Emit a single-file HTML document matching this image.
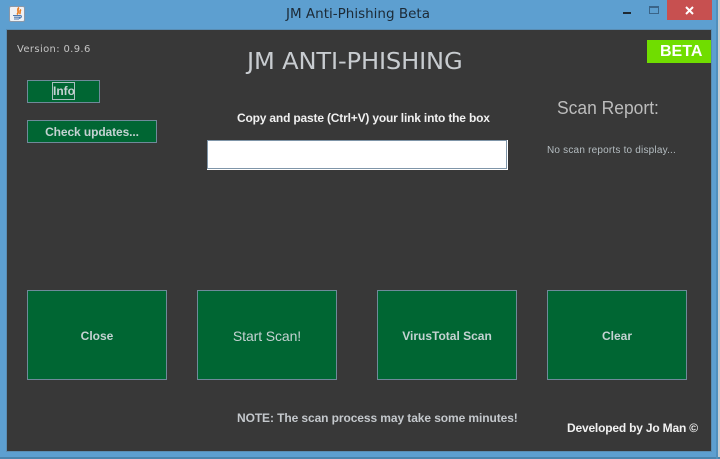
<!DOCTYPE html>
<html>
<head>
<meta charset="utf-8">
<style>
html,body{margin:0;padding:0;background:#5d9fd0;}
body{width:720px;height:459px;position:relative;overflow:hidden;font-family:"Liberation Sans",sans-serif;}
div{position:absolute;box-sizing:border-box;}
.t{white-space:nowrap;line-height:1;}
.b{background:#006633;border:1px solid #6f8a9a;color:#c4d2d2;font-weight:bold;font-size:12px;display:flex;align-items:center;justify-content:center;white-space:nowrap;padding-top:1px;}
</style>
</head>
<body>
<div style="left:718px;top:0;width:2px;height:459px;background:#c9ced2"></div>
<div style="left:0;top:457px;width:720px;height:2px;background:#4a84ad"></div>
<div style="left:716px;top:0;width:2px;height:459px;background:#4f8fbd"></div>
<div style="left:6px;top:29px;width:706px;height:423px;background:#5a8db3"></div>
<div style="left:7px;top:30px;width:704px;height:421px;background:#383838"></div>

<svg style="position:absolute;left:9px;top:6px" width="16" height="16" viewBox="0 0 16 16">
<rect x=".5" y=".5" width="15" height="15" rx="1.5" fill="#eef1f5" stroke="#8b98a8"/>
<path d="M10 1.5C7 4 11 5.5 8 8.5M12 3.5C10 5 12 6.5 10.5 8" fill="none" stroke="#e8791c" stroke-width="1.6"/>
<path d="M4 9.5h7M5 11.2h6M5 13h5M11 9.5c2 0 2 2-1 3" fill="none" stroke="#4a78b0" stroke-width="1.1"/>
</svg>
<div class="t" style="left:0;top:8px;width:716px;text-align:center;color:#1c2a36;font-family:'DejaVu Sans',sans-serif;font-size:13.5px">JM Anti-Phishing Beta</div>

<div style="left:623px;top:12px;width:8px;height:2px;background:#1f2a33"></div>
<div style="left:649px;top:6px;width:10px;height:8px;border:1px solid #3a6488;border-top-width:2px"></div>
<div style="left:667px;top:0;width:45px;height:20px;background:#c75050"></div>
<svg style="position:absolute;left:684px;top:6px" width="11" height="9" viewBox="0 0 11 9"><path d="M2 1l7 7M9 1l-7 7" stroke="#fff" stroke-width="2"/></svg>

<div class="t" style="left:17px;top:45px;color:#c4c4c4;letter-spacing:.35px;font-family:'DejaVu Sans',sans-serif;font-size:10px">Version: 0.9.6</div>

<div class="t" style="left:247px;top:51px;font-size:23px;color:#c8ccd0;font-family:'DejaVu Sans',sans-serif;letter-spacing:-.15px;transform-origin:left top;transform:scaleX(1.05)">JM ANTI-PHISHING</div>

<div style="left:647px;top:40px;width:64px;height:23px;background:#70dd00"></div>
<div class="t" style="left:660px;top:44px;font-size:16px;font-weight:bold;color:#fff">BETA</div>

<div class="b" style="left:27px;top:80px;width:73px;height:23px"></div>
<div class="t" style="left:52px;top:82px;width:23px;height:18px;border:1px solid #a9c0c0;color:#c4d2d2;font-size:12px;font-weight:bold;text-align:center;line-height:17px">Info</div>
<div class="b" style="left:27px;top:120px;width:130px;height:23px;letter-spacing:-.1px">Check updates...</div>

<div class="t" style="left:237px;top:112px;font-size:12px;font-weight:bold;color:#f0f0f0;letter-spacing:-.18px">Copy and paste (Ctrl+V) your link into the box</div>

<div style="left:207px;top:140px;width:301px;height:30px;background:#fff"></div>
<div style="left:207px;top:140px;width:300px;height:1px;background:#7f95a8"></div>
<div style="left:207px;top:140px;width:1px;height:29px;background:#7f95a8"></div>
<div style="left:506px;top:141px;width:1px;height:28px;background:#7f95a8"></div>
<div style="left:208px;top:168px;width:299px;height:1px;background:#7f95a8"></div>

<div class="t" style="left:557px;top:99px;font-size:18px;color:#bcbcbc;transform-origin:left top;transform:scaleX(.97)">Scan Report:</div>
<div class="t" style="left:547px;top:146px;font-size:10px;color:#b4bcc0;letter-spacing:.2px">No scan reports to display...</div>

<div class="b" style="left:27px;top:290px;width:140px;height:90px">Close</div>
<div class="b" style="left:197px;top:290px;width:140px;height:90px;font-weight:normal;font-size:14px;letter-spacing:-.1px">Start Scan!</div>
<div class="b" style="left:377px;top:290px;width:140px;height:90px">VirusTotal Scan</div>
<div class="b" style="left:547px;top:290px;width:140px;height:90px">Clear</div>

<div class="t" style="left:237px;top:412px;font-size:12px;font-weight:bold;color:#c4c8cc;letter-spacing:-.09px">NOTE: The scan process may take some minutes!</div>
<div class="t" style="left:567px;top:422px;font-size:12px;font-weight:bold;color:#f0f0f0;letter-spacing:-.19px">Developed by Jo Man ©</div>
</body>
</html>
